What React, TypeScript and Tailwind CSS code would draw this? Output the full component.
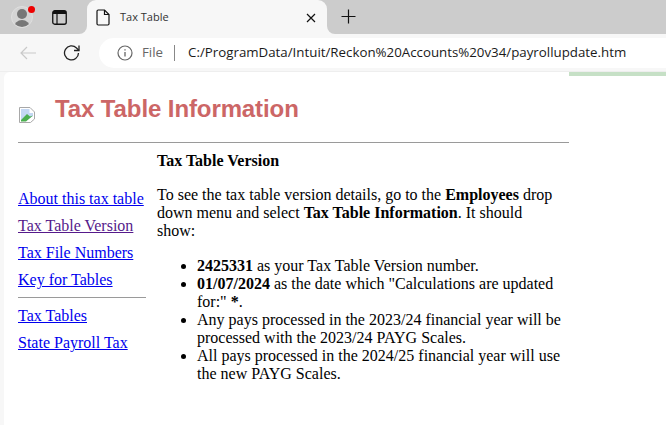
import React from "react";

const serif = "font-['Liberation_Serif','Times_New_Roman',serif]";

function NavLink({ children, visited }: { children: React.ReactNode; visited?: boolean }) {
  return (
    <a href="#" className={`block underline leading-[18px] ${visited ? "text-[#551a8b]" : "text-[#0000ee]"}`}>
      {children}
    </a>
  );
}

export default function App() {
  return (
    <div className="w-[666px] h-[425px] overflow-hidden bg-[#f7f7f7] flex flex-col font-['Inter','Liberation_Sans',sans-serif]">
      {/* Tab strip */}
      <div className="h-[34px] bg-[#f7f7f7] flex shrink-0">
        <div className="w-[87px] h-[34px] bg-[#cccccc] rounded-br-[8px] flex items-center relative">
          <div className="ml-[11px] w-[22px] h-[22px] rounded-full bg-[#d4d4d4] border border-[#dfdfdf] overflow-hidden flex flex-col items-center">
            <div className="w-[10px] h-[10px] rounded-full bg-[#777777] mt-[2px] shrink-0" />
            <div className="w-[16px] h-[10px] rounded-t-full bg-[#777777] mt-[1px] shrink-0" />
          </div>
          <div className="absolute left-[28px] top-[6px] w-[7px] h-[7px] rounded-full bg-[#ee0000]" />
          <svg className="ml-[19px]" width="15" height="15" viewBox="0 0 15 15" fill="none">
            <rect x="0.75" y="0.75" width="13.500" height="13.500" rx="2" stroke="#111" strokeWidth="1.300" />
            <path d="M1 1h13v3H1z" fill="#111" />
            <path d="M5 4v10" stroke="#111" strokeWidth="1.200" />
          </svg>
        </div>
        <div className="w-[240px] h-[34px] bg-[#cccccc]">
          <div className="h-full bg-[#f7f7f7] rounded-t-[9px] flex items-center pl-[9px] pr-[11px]">
            <svg width="14" height="17" viewBox="0 0 14 17" fill="none">
              <path d="M1 2.200C1 1.500 1.500 1 2.200 1H8.500L13 5.500V14.800c0 .7-.5 1.200-1.200 1.200H2.200C1.500 16 1 15.500 1 14.800z" stroke="#111" strokeWidth="1.200" />
              <path d="M8.500 1v4.500H13" stroke="#111" strokeWidth="1.200" />
            </svg>
            <span className="ml-[10px] text-[11px] text-[#333333] font-['Open_Sans',sans-serif] flex-1">Tax Table</span>
            <svg width="10" height="10" viewBox="0 0 10 10" fill="none" className="mb-[-2px]">
              <path d="M1 1l8 8M9 1l-8 8" stroke="#111" strokeWidth="1.200" />
            </svg>
          </div>
        </div>
        <div className="flex-1 h-[34px] bg-[#cccccc] rounded-bl-[8px] flex items-center pl-[14px] pb-[2px]">
          <svg width="15" height="15" viewBox="0 0 15 15" fill="none">
            <path d="M7.500 0.500v14M0.500 7.500h14" stroke="#111" strokeWidth="1.200" />
          </svg>
        </div>
      </div>

      {/* Toolbar */}
      <div className="h-[38px] bg-[#f7f7f7] flex items-center shrink-0 border-b border-[#eeeeee]">
        <svg className="ml-[19px]" width="18" height="14" viewBox="0 0 18 14" fill="none">
          <path d="M17 7H2M8 1L2 7l6 6" stroke="#c9c9c9" strokeWidth="1.200" />
        </svg>
        <svg className="ml-[26px]" width="18" height="18" viewBox="0 0 18 18" fill="none">
          <path d="M15.500 9a7 7 0 1 1-2-5L16 6.500" stroke="#222" strokeWidth="1.300" />
          <path d="M16 1.500v5h-5" stroke="#222" strokeWidth="1.300" />
        </svg>
        <div className="ml-[18px] flex-1 h-[30px] bg-white rounded-l-full flex items-center pl-[18px] pt-[1px] text-[13.3px] font-['Open_Sans',sans-serif]">
          <svg width="16" height="16" viewBox="0 0 16 16" fill="none">
            <circle cx="8" cy="8" r="7" stroke="#666" strokeWidth="1.200" />
            <path d="M8 7v4.500M8 4.200v1.300" stroke="#666" strokeWidth="1.300" />
          </svg>
          <span className="ml-[9px] text-[#666666]">File</span>
          <span className="ml-[11px] w-px h-[16px] bg-[#888888]" />
          <span className="ml-[13px] text-[#1a1a1a] whitespace-nowrap">C:/ProgramData/Intuit/Reckon%20Accounts%20v34/payrollupdate.htm</span>
        </div>
      </div>

      {/* Page */}
      <div className={`flex-1 ml-[4px] bg-white rounded-tl-[6px] overflow-hidden relative ${serif} text-[16px] leading-[18px] text-black`}>
        <div className="absolute right-0 top-0 w-[97px] h-[4px] bg-[#c6e0c6]" />
        <div className="w-[565px] pl-[14px]">
          <div className="h-[71px] flex items-start border-b border-[#9a9a9a]">
            <svg className="mt-[35px] ml-[1px] shrink-0" width="16" height="16" viewBox="0 0 16 16">
              <path d="M0.500 0.500H11L15.500 5V12L11.500 15.500H0.500z" fill="#fff" stroke="#a8a8a8" />
              <path d="M2 2h8.500v4H14v3L8 13H2z" fill="#c4d8f4" />
              <path d="M2 14.500V13l6-6 3 2.500 3-1L7 14.500z" fill="#4caf50" />
            </svg>
            <h1 className="ml-[20px] mt-[23px] text-[24px] leading-[28px] tracking-[-0.1px] font-bold text-[#cc6666] font-['Liberation_Sans',Arial,sans-serif] whitespace-nowrap">
              Tax Table Information
            </h1>
          </div>
          <div className="flex">
            <nav className="w-[128px] shrink-0 pt-[47px]">
              <div className="flex flex-col gap-[9px]">
                <NavLink>About this tax table</NavLink>
                <NavLink visited>Tax Table Version</NavLink>
                <NavLink>Tax File Numbers</NavLink>
                <NavLink>Key for Tables</NavLink>
              </div>
              <div className="mt-[8px] mb-[9px] h-px bg-[#9a9a9a]" />
              <div className="flex flex-col gap-[9px]">
                <NavLink>Tax Tables</NavLink>
                <NavLink>State Payroll Tax</NavLink>
              </div>
            </nav>
            <main className="ml-[11px] w-[405px] pt-[9px]">
              <p className="font-bold">Tax Table Version</p>
              <p className="mt-[16px]">
                To see the tax table version details, go to the <b>Employees</b> drop down menu and select <b>Tax Table Information</b>. It should show:
              </p>
              <ul className="mt-[17px] pl-[40px] list-disc">
                <li><b>2425331</b> as your Tax Table Version number.</li>
                <li><b>01/07/2024</b> as the date which "Calculations are updated for:" <b>*</b>.</li>
                <li>Any pays processed in the 2023/24 financial year will be processed with the 2023/24 PAYG Scales.</li>
                <li>All pays processed in the 2024/25 financial year will use the new PAYG Scales.</li>
              </ul>
            </main>
          </div>
        </div>
      </div>
    </div>
  );
}
